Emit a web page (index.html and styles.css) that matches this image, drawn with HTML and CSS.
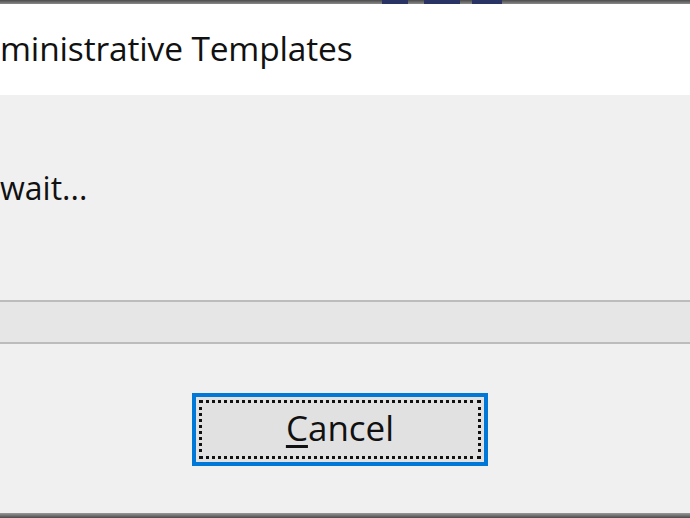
FILE: index.html
```html
<!DOCTYPE html>
<html lang="en">
<head>
    <meta charset="UTF-8">
    <title>Administrative Templates</title>
    <link rel="stylesheet" href="styles.css">
</head>
<body>
    <div class="edge-top">
        <span class="ghost ghost-a"></span>
        <span class="ghost ghost-b"></span>
        <span class="ghost ghost-c"></span>
    </div>
    <div class="titlebar">
        <span class="title">ministrative Templates</span>
    </div>
    <div class="dialog">
        <p class="status">wait...</p>
        <div class="progress"></div>
        <div class="actions">
            <button class="btn-cancel"><span class="btn-face"><u>C</u>ancel</span></button>
        </div>
    </div>
    <div class="edge-bottom"></div>
</body>
</html>
```

FILE: styles.css
```css
html, body {
    margin: 0;
    padding: 0;
}
body {
    width: 690px;
    height: 518px;
    overflow: hidden;
    background: #f0f0f0;
    font-family: "Open Sans", "Noto Sans", sans-serif;
    color: #111;
    display: flex;
    flex-direction: column;
}

.edge-top {
    height: 4px;
    background: linear-gradient(#4a4a4a, #8a8a8a);
    display: flex;
    flex-shrink: 0;
}
.ghost {
    height: 4px;
    background: #2a3464;
}
.ghost-a { margin-left: 382px; width: 26px; }
.ghost-b { margin-left: 16px; width: 36px; }
.ghost-c { margin-left: 12px; width: 30px; }

.titlebar {
    height: 91px;
    background: #fff;
    display: flex;
    align-items: center;
    flex-shrink: 0;
}
.title {
    font-size: 33.5px;
    padding-bottom: 4px;
    letter-spacing: -0.15px;
    font-weight: 500;
}

.dialog {
    flex: 1;
    display: flex;
    flex-direction: column;
}
.status {
    margin: 71px 0 0 0;
    font-size: 32px;
    line-height: 44px;
    font-weight: 500;
}
.progress {
    margin-top: 90px;
    height: 40px;
    background: #e6e6e6;
    border-top: 2px solid #bcbcbc;
    border-bottom: 2px solid #bcbcbc;
}
.actions {
    margin-top: 49px;
    padding-left: 192px;
}
.btn-cancel {
    width: 296px;
    height: 73px;
    padding: 3px;
    border: 4px solid #0078d7;
    background: #e1e1e1;
    font-family: inherit;
    font-size: 35px;
    font-weight: 500;
    color: #111;
    display: flex;
}
.btn-face {
    flex: 1;
    border: 3px dotted #111;
    display: flex;
    align-items: center;
    justify-content: center;
    padding-bottom: 4px;
}
.btn-face u {
    text-decoration-thickness: 3px;
    text-underline-offset: 4px;
}

.edge-bottom {
    height: 5px;
    background: linear-gradient(#9a9a9a, #4a4a4a);
    flex-shrink: 0;
}
```
